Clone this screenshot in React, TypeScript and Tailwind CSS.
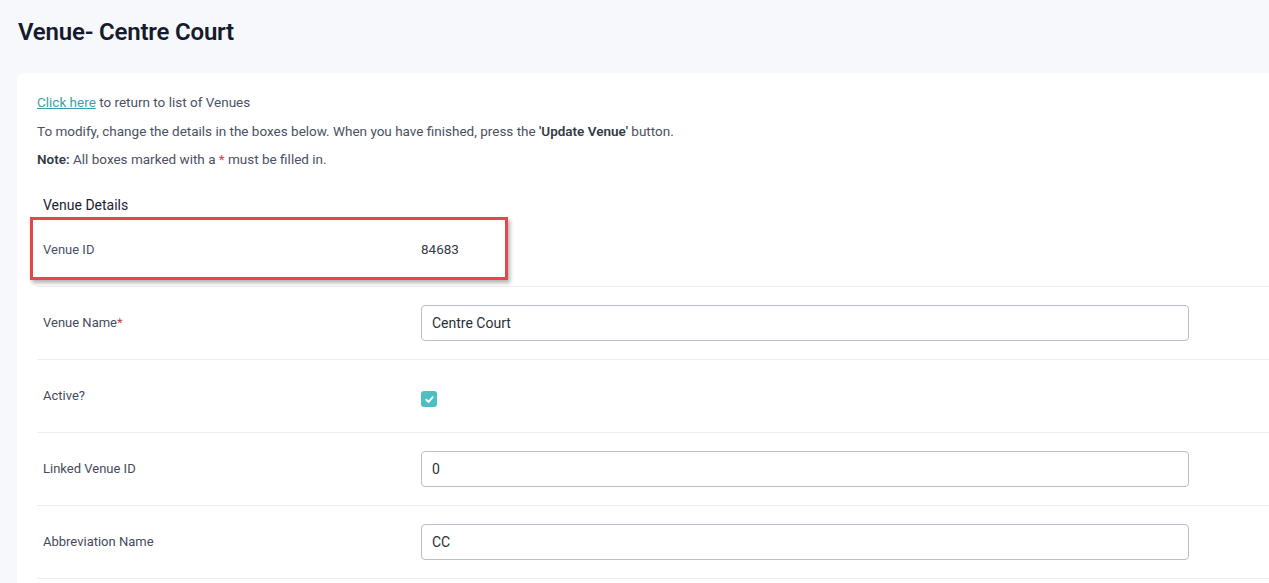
import React from "react";

function Row({ label, required, children }: { label: string; required?: boolean; children: React.ReactNode }) {
  return (
    <div className={"flex items-center h-[73px] border-b border-[#eceef1]"}>
      <div className="w-[384px] shrink-0 pl-[6px] text-[13px] font-normal text-[#454b5c]">
        {label}
        {required && <span className="text-[#c8414b]">*</span>}
      </div>
      <div className="flex-1">{children}</div>
    </div>
  );
}

function Input({ value }: { value: string }) {
  return (
    <div className="w-[768px] h-[36px] border border-[#b8bec6] rounded-[4px] flex items-center pl-[10px] pt-[2px] text-[14px] text-[#2a2e37] bg-white">
      {value}
    </div>
  );
}

export default function App() {
  return (
    <div className="min-h-[583px] h-[583px] overflow-hidden bg-[#f6f8fb] font-['Roboto',sans-serif]">
      <div className="pl-[18px] pt-[18px] h-[73px]">
        <h1 className="text-[24px] leading-[28px] font-semibold text-[#151b2c] tracking-[-0.2px]">Venue- Centre Court</h1>
      </div>
      <div className="ml-[17px] bg-white rounded-tl-[6px] pl-[20px] pt-[15px] min-h-[510px]">
        <div className="text-[13.5px] leading-[28.5px] text-[#4b5162]">
          <p>
            <a className="text-[#3e9fa6] underline">Click here</a> to return to list of Venues
          </p>
          <p>
            To modify, change the details in the boxes below. When you have finished, press the{" "}
            <b className="font-semibold text-[#353a46]">'Update Venue'</b> button.
          </p>
          <p>
            <b className="font-semibold text-[#353a46]">Note:</b> All boxes marked with a{" "}
            <span className="text-[#c8414b]">*</span> must be filled in.
          </p>
        </div>
        <div className="mt-[22px] pl-[6px] text-[14px] leading-[18px] text-[#1d2230]">Venue Details</div>
        <div className="relative">
          <div className="flex items-center h-[73px] border-b border-[#eceef1]">
            <div className="w-[384px] shrink-0 pl-[6px] text-[13px] text-[#4b5162]">Venue ID</div>
            <div className="text-[13.5px] text-[#353a46]">84683</div>
          </div>
          <div className="absolute left-[-7px] top-[3px] w-[478px] h-[63px] border-[3px] border-[#e5454b] shadow-[2px_3px_4px_rgba(0,0,0,0.3)]" />
        </div>
        <Row label="Venue Name" required>
          <Input value="Centre Court" />
        </Row>
        <Row label="Active?">
          <div className="w-[16px] h-[16px] rounded-[3px] bg-[#4dbfc4] flex items-center justify-center mt-[7px]">
            <svg width="11" height="11" viewBox="0 0 12 12" fill="none">
              <path d="M2.5 6.3 L5 8.7 L9.6 3.4" stroke="white" strokeWidth="2" strokeLinecap="round" strokeLinejoin="round" />
            </svg>
          </div>
        </Row>
        <Row label="Linked Venue ID">
          <Input value="0" />
        </Row>
        <Row label="Abbreviation Name">
          <Input value="CC" />
        </Row>
      </div>
    </div>
  );
}
